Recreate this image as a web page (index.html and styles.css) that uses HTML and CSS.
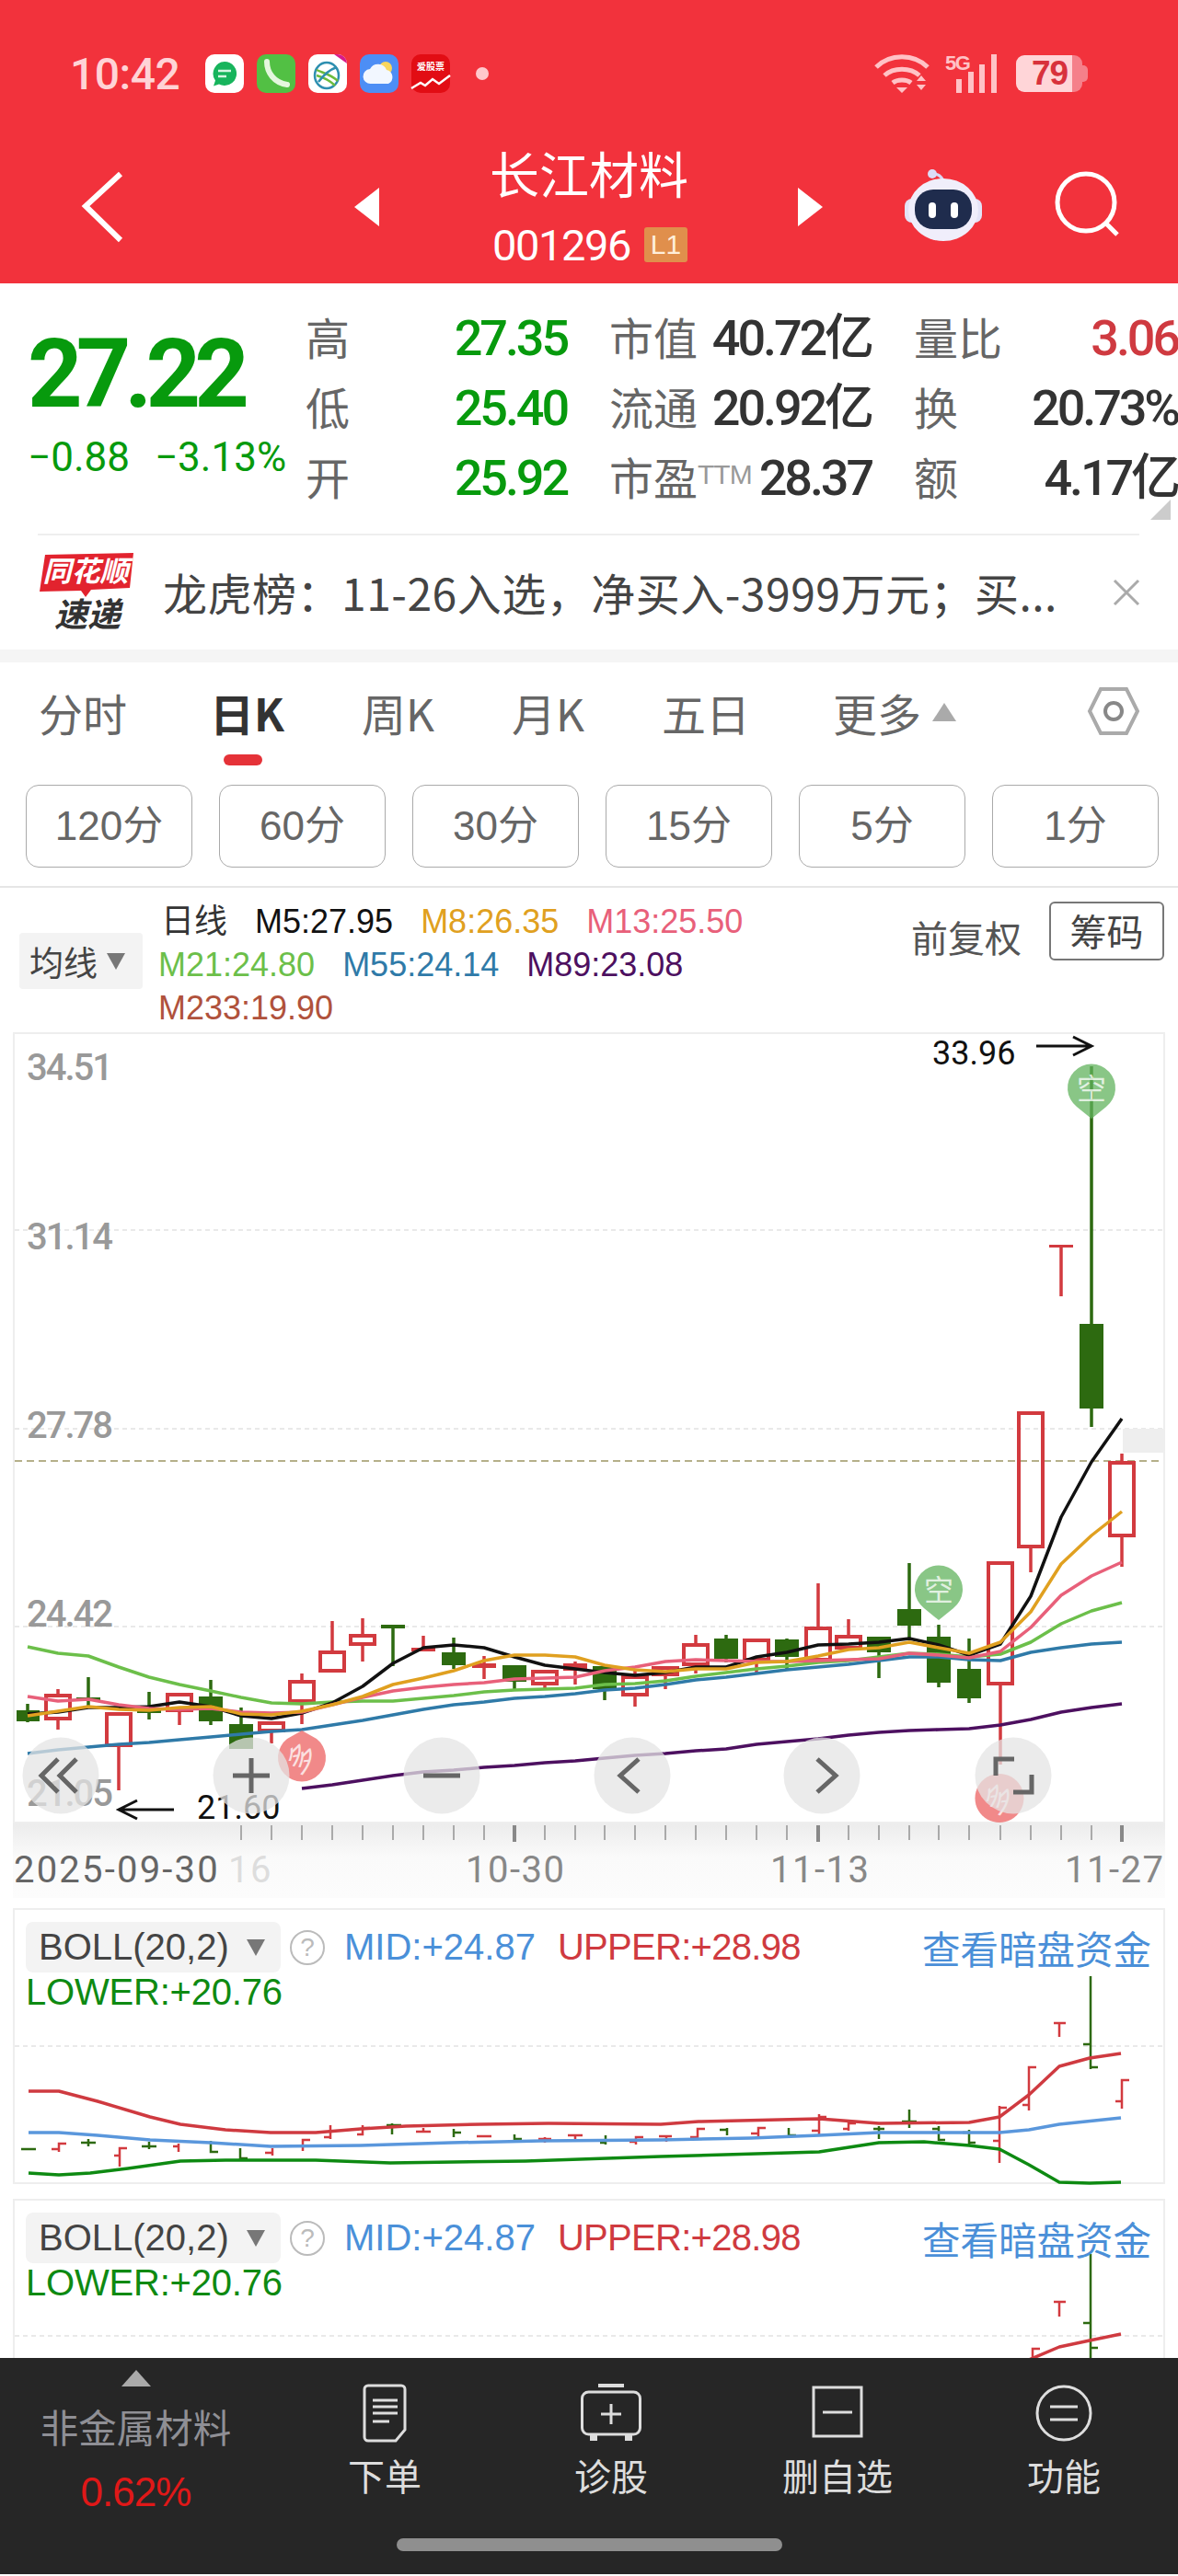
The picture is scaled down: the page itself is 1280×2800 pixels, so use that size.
FILE: index.html

```html
<!DOCTYPE html>
<html lang="zh">
<head>
  <meta charset="UTF-8" />
  <meta name="viewport" content="width=device-width, initial-scale=1.0"/>
  <title>长江材料 001296</title>
  <link rel="stylesheet" href="styles.css">
</head>
<body>
  <header class="top">
    <div class="status">
      <span class="time">10:42</span>
      <div class="apps">
        <svg class="app" viewBox="0 0 42 42"><rect width="42" height="42" rx="10" fill="#fff"/><path d="M21 8a13 13 0 1 1-6 24.500l-6 2 2-6A13 13 0 0 1 21 8z" fill="#17b45c"/><path d="M14 18h14M14 24h9" stroke="#d5f5e2" stroke-width="2.500"/></svg>
        <svg class="app" viewBox="0 0 42 42"><rect width="42" height="42" rx="10" fill="#52c044"/><path d="M11 8c0 12 8 23 22 25" fill="none" stroke="#e4f7dd" stroke-width="6" stroke-linecap="round"/></svg>
        <svg class="app" viewBox="0 0 42 42"><rect width="42" height="42" rx="10" fill="#fff"/><ellipse cx="20" cy="23" rx="13" ry="14" fill="none" stroke="#2e8fb0" stroke-width="2.500"/><path d="M9 17c6 3 16 5 23 12M9 23c7 2 14 5 20 11" fill="none" stroke="#6cbb3c" stroke-width="2.500"/><path d="M11 30c6-8 14-14 20-16" fill="none" stroke="#2e8fb0" stroke-width="2.500"/><path d="M28 0h4a10 10 0 0 1 10 10L28 0z" fill="#d81b8a"/></svg>
        <svg class="app" viewBox="0 0 42 42"><rect width="42" height="42" rx="10" fill="#4d8ef5"/><circle cx="28" cy="15" r="7" fill="#f9d65c"/><path d="M12 32a8 8 0 0 1-1-16 10 10 0 0 1 18 1 8 8 0 0 1 2 15z" fill="#f2f7ff"/></svg>
        <svg class="app" viewBox="0 0 42 42"><rect width="42" height="42" rx="10" fill="#e20d14"/><text class="app-txt" x="21" y="17">爱股票</text><path d="M0 37l10-6 5 3 8-7 7 5 12-9" fill="none" stroke="#fff" stroke-width="2.500"/></svg>
      </div>
      <span class="dot"></span>
      <svg class="wifi" viewBox="0 0 60 42"><path d="M2 14c15-15 41-15 56 0M11 23c10-9 28-9 38 0M20 31c5-4 15-4 20 0" fill="none" stroke="#ffc2c6" stroke-width="5"/><path d="M24 36h12l-6 6zM46 29l5-6 5 6zM46 33h10l-5 6z" fill="#ffc2c6"/></svg>
      <div class="signal">
        <span class="five-g">5G</span>
        <svg class="bars" viewBox="0 0 56 42"><path d="M12 27h6v15h-6zM25 19h6v23h-6zM37 11h6v31h-6zM50 0h6v42h-6z" fill="#ffc2c6"/></svg>
      </div>
      <div class="battery"><span class="batt-level">79</span></div>
    </div>
    <nav class="nav">
      <svg class="back" viewBox="0 0 44 76"><path d="M41 2L3 37l38 37" fill="none" stroke="#fff" stroke-width="6"/></svg>
      <svg class="prev" viewBox="0 0 27 42"><path d="M27 0L0 21l27 21z" fill="#fff"/></svg>
      <div class="title">
        <div class="name">长江材料</div>
        <div class="code-row"><span class="code">001296</span><span class="lvl">L1</span></div>
      </div>
      <svg class="next" viewBox="0 0 27 42"><path d="M0 0l27 21L0 42z" fill="#fff"/></svg>
      <svg class="robot" viewBox="0 0 84 78">
        <path d="M30 6c5-2 9 1 12 6" fill="none" stroke="#d8d8f4" stroke-width="3"/>
        <circle cx="30" cy="5" r="5" fill="#dcdcf6"/>
        <rect x="0" y="32" width="84" height="26" rx="8" fill="#e3e3f7"/>
        <ellipse cx="42" cy="44" rx="38" ry="34" fill="#f0eefb"/>
        <rect x="11" y="22" width="62" height="43" rx="20" fill="#1f2c4d"/>
        <rect x="26" y="36" width="8" height="17" rx="4" fill="#fff"/>
        <rect x="50" y="36" width="8" height="17" rx="4" fill="#fff"/>
      </svg>
      <svg class="search" viewBox="0 0 70 70"><circle cx="33" cy="33" r="31" fill="none" stroke="#fff" stroke-width="5"/><path d="M55 56l12 12" stroke="#fff" stroke-width="5"/></svg>
    </nav>
  </header>

  <section class="quote">
    <div class="price-box">
      <div class="price">27.22</div>
      <div class="change"><span>−0.88</span><span>−3.13%</span></div>
    </div>
    <div class="stats">
      <div class="stat"><span class="lab">高</span><span class="val down">27.35</span></div>
      <div class="stat"><span class="lab">市值</span><span class="val">40.72亿</span></div>
      <div class="stat"><span class="lab">量比</span><span class="val up">3.06</span></div>
      <div class="stat"><span class="lab">低</span><span class="val down">25.40</span></div>
      <div class="stat"><span class="lab">流通</span><span class="val">20.92亿</span></div>
      <div class="stat"><span class="lab">换</span><span class="val">20.73%</span></div>
      <div class="stat"><span class="lab">开</span><span class="val down">25.92</span></div>
      <div class="stat"><span class="lab">市盈<sup class="ttm">TTM</sup></span><span class="val">28.37</span></div>
      <div class="stat"><span class="lab">额</span><span class="val">4.17亿</span></div>
    </div>
    <span class="corner"></span>
  </section>

  <section class="news">
    <svg class="news-logo" viewBox="0 0 104 86">
      <path d="M6 2L102 0l-4 38-42 2-6 8-5-7L0 42z" fill="#e2232e"/>
      <text class="logo-top" x="50" y="31">同花顺</text>
      <text class="logo-bot" x="52" y="80">速递</text>
    </svg>
    <span class="news-text">龙虎榜：11-26入选，净买入-3999万元；买...</span>
    <svg class="close" viewBox="0 0 30 28"><path d="M2 1l26 26M28 1L2 27" stroke="#aaa" stroke-width="3"/></svg>
  </section>

  <div class="tabs">
    <span class="tab">分时</span>
    <span class="tab active">日K</span>
    <span class="tab">周K</span>
    <span class="tab">月K</span>
    <span class="tab">五日</span>
    <span class="tab more">更多<i class="more-arrow"></i></span>
    <svg class="hex" viewBox="0 0 56 52"><path d="M14 2h28l12 24-12 24H14L2 26z" fill="none" stroke="#aaa" stroke-width="4"/><circle cx="28" cy="26" r="9" fill="none" stroke="#888" stroke-width="4"/></svg>
  </div>

  <div class="periods">
    <span class="period">120分</span>
    <span class="period">60分</span>
    <span class="period">30分</span>
    <span class="period">15分</span>
    <span class="period">5分</span>
    <span class="period">1分</span>
  </div>

  <div class="ma-head">
    <div class="ma-btn">均线<i class="caret"></i></div>
    <div class="ma-lines">
      <div class="ma-row"><span class="ma-day">日线</span><span class="m5">M5:27.95</span><span class="m8">M8:26.35</span><span class="m13">M13:25.50</span></div>
      <div class="ma-row"><span class="m21">M21:24.80</span><span class="m55">M55:24.14</span><span class="m89">M89:23.08</span></div>
      <div class="ma-row"><span class="m233">M233:19.90</span></div>
    </div>
    <div class="ma-right">
      <span class="adjust">前复权</span>
      <span class="chips">筹码</span>
    </div>
  </div>

  <div class="chart">
    <svg class="plot" viewBox="16 1126 1248 856">
      <path class="grid" d="M16 1339H1264M16 1555H1264M16 1770H1264"/>
      <path class="last-line" d="M16 1590H1264"/>
      <rect x="1220" y="1555" width="44" height="26" fill="#eee"/>
      <text class="ylab" x="29" y="1176">34.51</text>
      <text class="ylab" x="29" y="1360">31.14</text>
      <text class="ylab" x="29" y="1565">27.78</text>
      <text class="ylab" x="29" y="1770">24.42</text>
      <text class="ylab" x="29" y="1965">21.05</text>

      <path class="wick-g" d="M30 1854V1874M96 1825V1857M162 1841V1871M229 1828V1877M262 1858V1903M427 1768V1813M493 1782V1816M559 1830V1838M657 1838V1850M789 1779V1809M855 1783V1817M955 1798V1826M988 1701V1783M1020 1768V1836M1053 1783V1853M1186 1161V1553"/>
      <path class="body-g" d="M18 1861h25v12h-25zM83 1847h26v4h-26zM149 1861h26v3h-26zM216 1846h26v27h-26zM249 1876h26v27h-26zM414 1768h26v4h-26zM480 1798h26v14h-26zM546 1812h26v18h-26zM644 1813h26v25h-26zM776 1783h26v22h-26zM842 1784h26v19h-26zM942 1781h26v17h-26zM975 1751h26v18h-26zM1007 1781h26v50h-26zM1040 1816h26v32h-26zM1173 1441h26v92h-26z"/>
      <path class="wick-r" d="M63 1838V1845M63 1870V1882M129 1901V1948M195 1863V1877M295 1885V1897M328 1821V1830M328 1851V1876M361 1764V1798M394 1761V1780M394 1789V1808M460 1780V1797M526 1802V1827M592 1832V1837M625 1808V1833M690 1818V1825M690 1844V1857M723 1822V1838M756 1779V1790M756 1811V1821M822 1806V1820M889 1723V1772M889 1806V1810M922 1762V1781M1087 1832V1920M1120 1683V1711M1153 1355V1411M1219 1582V1592M1219 1671V1705"/>
      <path class="body-r" d="M50 1845h26v25h-26zM116 1865h26v34h-26zM182 1844h26v17h-26zM282 1875h26v8h-26zM315 1830h26v21h-26zM348 1798h26v20h-26zM381 1780h26v9h-26zM579 1819h26v13h-26zM677 1825h26v19h-26zM710 1815h26v7h-26zM743 1790h26v21h-26zM809 1785h26v21h-26zM876 1772h26v34h-26zM909 1781h26v12h-26zM1074 1701h26v131h-26zM1107 1538h26v145h-26zM1206 1592h26v79h-26z"/>
      <path class="bar-r" d="M447 1793h26v4h-26zM513 1810h26v5h-26zM612 1810h26v8h-26zM1140 1355h26v3h-26z"/>

      <path class="ma c89" d="M328 1946L361 1942L394 1937L427 1932L460 1928L493 1926L526 1923L559 1921L592 1918L625 1916L657 1913L690 1910L723 1908L756 1905L789 1903L822 1898L855 1895L889 1892L922 1888L955 1885L988 1883L1020 1882L1053 1881L1087 1877L1120 1871L1153 1863L1186 1858L1219 1854"/>
      <path class="ma c55" d="M30 1908L63 1904L96 1901L129 1898L162 1896L195 1893L229 1890L262 1887L295 1884L328 1882L361 1877L394 1872L427 1866L460 1860L493 1855L526 1852L559 1848L592 1846L625 1843L657 1839L690 1837L723 1833L756 1828L789 1825L822 1821L855 1817L889 1814L922 1811L955 1807L988 1803L1020 1803L1053 1806L1087 1807L1120 1798L1153 1793L1186 1789L1219 1787"/>
      <path class="ma c21" d="M30 1792L63 1799L96 1802L129 1814L162 1825L195 1833L229 1840L262 1847L295 1853L328 1854L361 1852L394 1851L427 1851L460 1848L493 1845L526 1841L559 1839L592 1838L625 1837L657 1833L690 1832L723 1829L756 1824L789 1820L822 1816L855 1813L889 1809L922 1807L955 1803L988 1799L1020 1800L1053 1803L1087 1800L1120 1787L1153 1767L1186 1753L1219 1744"/>
      <path class="ma c5" d="M30 1865L63 1863L96 1858L129 1858L162 1857L195 1852L229 1857L262 1867L295 1870L328 1864L361 1853L394 1835L427 1810L460 1793L493 1790L526 1793L559 1803L592 1812L625 1816L657 1820L690 1823L723 1820L756 1814L789 1814L822 1803L855 1798L889 1790L922 1789L955 1787L988 1783L1020 1790L1053 1801L1087 1789L1120 1737L1153 1651L1186 1591L1219 1544"/>
      <path class="ma c13" d="M30 1846L63 1851L96 1849L129 1855L162 1859L195 1860L229 1859L262 1863L295 1864L328 1863L361 1855L394 1847L427 1840L460 1836L493 1833L526 1831L559 1827L592 1826L625 1825L657 1818L690 1814L723 1808L756 1806L789 1807L822 1808L855 1808L889 1807L922 1806L955 1805L988 1799L1020 1801L1053 1804L1087 1797L1120 1771L1153 1736L1186 1715L1219 1700"/>
      <path class="ma c8" d="M30 1867L63 1862L96 1857L129 1860L162 1861L195 1858L229 1857L262 1865L295 1866L328 1862L361 1855L394 1846L427 1833L460 1826L493 1818L526 1807L559 1801L592 1801L625 1803L657 1812L690 1817L723 1819L756 1816L789 1816L822 1809L855 1808L889 1802L922 1795L955 1793L988 1787L1020 1793L1053 1799L1087 1787L1120 1754L1153 1702L1186 1671L1219 1645"/>

      <path class="pin-r" d="M328 1883l16 9a26 26 0 1 1-32 0z"/>
      <text class="pin-txt" transform="translate(328 1913) rotate(-45)" y="11">多</text>
      <path class="pin-r" d="M1086 1930a26.500 26.500 0 1 1-.1 0z"/>
      <text class="pin-txt" transform="translate(1086 1957) rotate(-45)" y="11">多</text>
      <path class="pin-g" d="M1020 1763l-16-13a26 26 0 1 1 32 0z"/>
      <text class="pin-txt" x="1020" y="1742">空</text>
      <path class="pin-g" d="M1186 1218l-16-13a26 26 0 1 1 32 0z"/>
      <text class="pin-txt" x="1186" y="1197">空</text>

      <text class="mark" x="1013" y="1159">33.96</text>
      <path class="arrow" d="M1126 1139h60M1166 1129l20 10-20 10"/>
      <text class="mark" x="214" y="1979">21.60</text>
      <path class="arrow" d="M189 1969h-60M149 1959l-20 10 20 10"/>

      <circle class="tool" cx="66" cy="1932" r="41.500"/>
      <circle class="tool" cx="273" cy="1932" r="41.500"/>
      <circle class="tool" cx="480" cy="1932" r="41.500"/>
      <circle class="tool" cx="687" cy="1932" r="41.500"/>
      <circle class="tool" cx="893" cy="1932" r="41.500"/>
      <circle class="tool" cx="1101" cy="1932" r="41.500"/>
      <path class="tool-ico" d="M63 1914l-18 18 18 18M83 1914l-18 18 18 18"/>
      <path class="tool-ico" d="M273 1913v38M253 1932h40"/>
      <path class="tool-ico" d="M460 1932h40"/>
      <path class="tool-ico" d="M694 1914l-20 18 20 18"/>
      <path class="tool-ico" d="M888 1914l20 18-20 18"/>
      <path class="tool-ico" d="M1082 1932v-18h20M1121 1931v19h-20"/>
    </svg>
  </div>

  <div class="axis">
    <svg class="ticks" viewBox="14 1984 1252 81">
      <path class="tick" d="M262 1986v16M295 1986v16M328 1986v16M361 1986v16M394 1986v16M427 1986v16M460 1986v16M493 1986v16M526 1986v16M592 1986v16M625 1986v16M657 1986v16M690 1986v16M723 1986v16M756 1986v16M789 1986v16M822 1986v16M855 1986v16M922 1986v16M955 1986v16M988 1986v16M1020 1986v16M1053 1986v16M1087 1986v16M1120 1986v16M1153 1986v16M1186 1986v16"/>
      <path class="tick-big" d="M559 1986v18M889 1986v18M1219 1986v18"/>
      <text class="date first" x="15" y="2048">2025-09-30</text>
      <text class="date ghost" x="248" y="2048">16</text>
      <text class="date" x="506" y="2048">10-30</text>
      <text class="date" x="837" y="2048">11-13</text>
      <text class="date" x="1157" y="2048">11-27</text>
    </svg>
  </div>

  <div class="panels">
    <div class="panel">
      <svg class="boll" viewBox="16 2078 1248 297">
        <path class="grid" d="M16 2226H1264"/>
        <path class="mini-g" d="M23 2338h16M96 2327v8M88 2331h16M162 2330v8M154 2335h16M229 2329v12h8M261 2337v11h8M426 2310v12M420 2312h16M493 2316v9M493 2320h8M559 2322v8M559 2327h8M658 2323v10M652 2331h6M790 2315v8M790 2317h-8M857 2315v8M857 2323h8M955 2313v14M949 2316h12M988 2295v20M980 2308h16M1020 2313v16M1020 2316h-7M1020 2328h7M1053 2317v17M1053 2320h-7M1053 2331h7M1185 2150v101M1185 2224h-8M1185 2249h8"/>
        <path class="mini-r" d="M64 2341v-9h8M56 2338h8M130 2357v-20h8M124 2345h6M194 2332v9M188 2335h6M288 2342h8M296 2337v8M329 2340v-12h8M359 2312v15M352 2325h7M394 2312v10h-6M394 2315h8M452 2319h16M460 2315v5M518 2324h16M585 2327h14M592 2325v6M617 2323h16M625 2322v6M691 2333v-8h8M684 2330h7M716 2324h14M724 2324v6M758 2327v-11h8M750 2325h8M824 2324v-9h8M816 2321h8M890 2322v-22M890 2303h8M882 2318h8M922 2318v-8h8M916 2316h6M1086 2353v-62M1086 2293h8M1079 2329h7M1118 2296v-47h8M1111 2290h7M1151 2200v16M1145 2201h13M1219 2294v-31h8M1212 2286h7"/>
        <path class="bl red" d="M31 2275L64 2275L106 2286L163 2303L196 2311L245 2317L294 2320L343 2320L392 2316L441 2313L522 2311L596 2310L718 2311L759 2308L890 2305L955 2310L1053 2309L1086 2303L1118 2279L1151 2248L1184 2239L1218 2234"/>
        <path class="bl blue" d="M31 2320L64 2320L106 2323L163 2328L229 2331L294 2335L392 2334L490 2331L588 2329L718 2328L816 2326L890 2323L955 2320L1020 2320L1086 2320L1118 2317L1151 2311L1218 2304"/>
        <path class="bl green" d="M31 2364L64 2366L98 2364L139 2359L196 2351L245 2350L343 2350L424 2353L571 2351L718 2346L857 2342L890 2341L955 2331L1004 2330L1053 2334L1086 2338L1118 2355L1151 2374L1184 2375L1218 2374"/>
      </svg>
      <div class="panel-row">
        <div class="boll-btn">BOLL(20,2)<i class="caret"></i></div>
        <span class="help">?</span>
        <span class="mid">MID:+24.87</span>
        <span class="upper">UPPER:+28.98</span>
        <span class="dark-link">查看暗盘资金</span>
      </div>
      <div class="lower">LOWER:+20.76</div>
    </div>
    <div class="panel">
      <svg class="boll" viewBox="16 2394 1248 297">
        <path class="grid" d="M16 2541H1264"/>
        <path class="mini-g" d="M1185 2452v120M1185 2527h-8M1185 2554h8"/>
        <path class="mini-r" d="M1151 2503v17M1145 2504h13M1122 2572v-17h8"/>
        <path class="bl red" d="M1118 2567L1151 2553L1184 2546L1218 2539"/>
      </svg>
      <div class="panel-row">
        <div class="boll-btn">BOLL(20,2)<i class="caret"></i></div>
        <span class="help">?</span>
        <span class="mid">MID:+24.87</span>
        <span class="upper">UPPER:+28.98</span>
        <span class="dark-link">查看暗盘资金</span>
      </div>
      <div class="lower">LOWER:+20.76</div>
    </div>
  </div>

  <footer class="bottom">
    <div class="bottom-row">
      <div class="sector">
        <i class="sector-arrow"></i>
        <div class="sector-name">非金属材料</div>
        <div class="sector-pct">0.62%</div>
      </div>
      <div class="action">
        <svg class="act-ico" viewBox="0 0 66 64"><path d="M15 2h36a4 4 0 0 1 4 4v44l-10 12H15a4 4 0 0 1-4-4V6a4 4 0 0 1 4-4z" fill="none" stroke="#ddd" stroke-width="3"/><path d="M20 18h27M20 25h27M20 32h27M20 41h18" stroke="#ddd" stroke-width="3"/></svg>
        <span>下单</span>
      </div>
      <div class="action">
        <svg class="act-ico" viewBox="0 0 66 64"><path d="M19 2h28" stroke="#ddd" stroke-width="4"/><rect x="1.500" y="9" width="63" height="46" rx="7" fill="none" stroke="#ddd" stroke-width="3"/><path d="M33 22v22M22 33h22" stroke="#ddd" stroke-width="3"/><path d="M10 56h8v6h-8zM48 56h8v6h-8z" fill="#ddd"/></svg>
        <span>诊股</span>
      </div>
      <div class="action">
        <svg class="act-ico" viewBox="0 0 66 64"><rect x="7" y="4" width="52" height="53" fill="none" stroke="#ddd" stroke-width="3"/><path d="M17 31h32" stroke="#ddd" stroke-width="3"/></svg>
        <span>删自选</span>
      </div>
      <div class="action">
        <svg class="act-ico" viewBox="0 0 66 64"><circle cx="33" cy="32" r="29" fill="none" stroke="#ddd" stroke-width="3"/><path d="M18 25h30M18 39h30" stroke="#ddd" stroke-width="3"/></svg>
        <span>功能</span>
      </div>
    </div>
    <div class="handle"></div>
  </footer>
</body>
</html>
```

FILE: styles.css

```css
* {
  box-sizing: border-box;
}
html, body {
  margin: 0;
}
body {
  width: 1280px;
  height: 2800px;
  overflow: hidden;
  background: #fff;
  color: #444;
  font-family: "Noto Sans CJK SC", "Noto Sans", sans-serif;
}
svg {
  display: block;
  flex: none;
  overflow: visible;
}

/* red top bar */
.top {
  height: 308px;
  padding-top: 59px;
  background: #f2323c;
}
.status {
  display: flex;
  align-items: center;
  height: 42px;
  padding-left: 76px;
}
.time {
  width: 118px;
  font: 500 48px Roboto, sans-serif;
  letter-spacing: -0.5px;
  color: #ffd3d6;
}
.apps {
  display: flex;
  gap: 14px;
  margin-left: 29px;
}
.app {
  width: 42px;
  height: 42px;
}
.app-txt {
  font: 700 10px "Noto Sans CJK SC", sans-serif;
  fill: #fff;
  text-anchor: middle;
}
.dot {
  width: 14px;
  height: 14px;
  margin-left: 28px;
  border-radius: 50%;
  background: #ffc8cc;
}
.wifi {
  width: 60px;
  height: 42px;
  margin-left: 419px;
}
.signal {
  position: relative;
  width: 56px;
  height: 42px;
  margin-left: 17px;
}
.five-g {
  position: absolute;
  left: 0;
  top: 0;
  font: 700 22px/20px "Liberation Sans", sans-serif;
  letter-spacing: -1.500px;
  color: #ffc2c6;
}
.bars {
  width: 56px;
  height: 42px;
}
.battery {
  position: relative;
  width: 72px;
  height: 40px;
  margin-left: 21px;
  padding-left: 17px;
  border-radius: 9px;
  background: linear-gradient(90deg, #ffd5d8 85%, #f5808a 85%);
  font: 700 37px/40px "Liberation Sans", sans-serif;
  color: #d8323c;
}
.battery::after {
  content: "";
  position: absolute;
  right: -6px;
  top: 11px;
  width: 6px;
  height: 18px;
  border-radius: 0 5px 5px 0;
  background: #f5808a;
}
.batt-level {
  letter-spacing: -1px;
}
.nav {
  display: flex;
  align-items: center;
  height: 130px;
  margin-top: 59px;
  padding-left: 90px;
}
.back {
  width: 44px;
  height: 76px;
}
.prev {
  width: 27px;
  height: 42px;
  margin-left: 251px;
}
.title {
  width: 215px;
  margin-left: 120px;
  color: #fff;
}
.name {
  margin-top: -6px;
  font-size: 54px;
  line-height: 62px;
  text-align: center;
  white-space: nowrap;
}
.code-row {
  display: flex;
  align-items: center;
  justify-content: space-between;
  height: 40px;
  margin-top: 27px;
  margin-bottom: 1px;
  padding-left: 3px;
}
.code {
  font: 400 47px Roboto, sans-serif;
  letter-spacing: -1.400px;
}
.lvl {
  width: 47px;
  height: 38px;
  border-radius: 3px;
  background: #e08f4c;
  font: 400 30px/38px "Liberation Sans", sans-serif;
  text-align: center;
  color: #ffeeda;
}
.next {
  width: 27px;
  height: 42px;
  margin-left: 120px;
}
.robot {
  width: 84px;
  height: 78px;
  margin-left: 89px;
  margin-top: -4px;
}
.search {
  width: 70px;
  height: 70px;
  margin-left: 80px;
  margin-top: -6px;
}

/* price block */
.quote {
  position: relative;
  display: flex;
  height: 272px;
  padding: 20px 0 0 30px;
}
.price-box {
  width: 303px;
}
.price {
  margin-top: 21px;
  font: 700 104px/116px Roboto, sans-serif;
  letter-spacing: -7px;
  color: #079a0d;
}
.change {
  display: flex;
  gap: 27px;
  margin-top: 6px;
  font: 400 44px/52px Roboto, sans-serif;
  color: #079a0d;
}
.stats {
  display: grid;
  grid-template-columns: 284px 285px 287px;
  grid-auto-rows: 76px;
  column-gap: 46px;
}
.stat {
  display: flex;
  align-items: center;
  justify-content: space-between;
}
.lab {
  padding-bottom: 2px;
  font-size: 48px;
  color: #666;
  line-height: 60px;
  white-space: nowrap;
}
.ttm {
  font: 300 30px "Liberation Sans", sans-serif;
  letter-spacing: -1px;
  vertical-align: 12px;
  line-height: 0;
  color: #999;
}
.val {
  padding-top: 4px;
  font: 500 54px/60px Roboto, "Noto Sans CJK SC", sans-serif;
  letter-spacing: -3.100px;
  color: #333;
  white-space: nowrap;
}
.val.down {
  color: #079a0d;
}
.val.up {
  color: #cf3a40;
}
.corner {
  position: absolute;
  right: 8px;
  bottom: 15px;
  width: 0;
  height: 0;
  border-left: 22px solid transparent;
  border-bottom: 22px solid #ccc;
}

/* news strip */
.news {
  display: flex;
  align-items: center;
  height: 126px;
  margin: 0 42px 0 41px;
  border-top: 2px solid #eee;
}
.news-logo {
  width: 104px;
  height: 86px;
  margin-left: 2px;
}
.logo-top {
  font: italic 700 31px "Noto Sans CJK SC", sans-serif;
  fill: #fff;
  text-anchor: middle;
}
.logo-bot {
  font: italic 700 36px "Noto Sans CJK SC", sans-serif;
  fill: #333;
  text-anchor: middle;
}
.news-text {
  margin-left: 30px;
  padding-bottom: 2px;
  font-size: 48px;
  letter-spacing: 0.500px;
  white-space: nowrap;
  color: #444;
}
.close {
  width: 30px;
  height: 28px;
  margin-left: auto;
  margin-right: -1px;
}

/* period tabs */
.tabs {
  display: flex;
  align-items: center;
  gap: 84px;
  height: 147px;
  padding: 0 42px 25px 42px;
  border-top: 14px solid #f5f5f5;
}
.tab {
  position: relative;
  font-size: 48px;
  line-height: 60px;
  color: #666;
  white-space: nowrap;
}
.tab.active {
  margin-left: 6px;
  font-weight: 700;
  color: #333;
}
.tab.active::after {
  content: "";
  position: absolute;
  left: 15px;
  bottom: -28px;
  width: 42px;
  height: 12px;
  border-radius: 6px;
  background: #e53238;
}
.more {
  display: flex;
  align-items: center;
  gap: 12px;
  margin-left: 6px;
}
.more-arrow {
  width: 0;
  height: 0;
  border-left: 13px solid transparent;
  border-right: 13px solid transparent;
  border-bottom: 20px solid #aaa;
}
.hex {
  width: 56px;
  height: 52px;
  margin-left: auto;
  margin-top: -3px;
}
.periods {
  display: grid;
  grid-template-columns: repeat(6, 181px);
  gap: 29px;
  height: 112px;
  padding-left: 28px;
  border-bottom: 2px solid #e6e6e6;
}
.period {
  height: 90px;
  border: 1px solid #aaa;
  border-radius: 14px;
  font: 400 44px/88px "Liberation Sans", "Noto Sans CJK SC", sans-serif;
  text-align: center;
  color: #666;
}

/* moving average legend */
.ma-head {
  display: flex;
  height: 157px;
  padding: 13px 15px 0 21px;
}
.ma-btn {
  display: flex;
  align-items: center;
  gap: 10px;
  width: 134px;
  height: 61px;
  margin-top: 36px;
  padding-left: 11px;
  border-radius: 4px;
  background: #f3f3f3;
  font-size: 37px;
  color: #444;
}
.caret {
  display: block;
  width: 0;
  height: 0;
  border-left: 10px solid transparent;
  border-right: 10px solid transparent;
  border-top: 18px solid #777;
}
.ma-lines {
  margin-left: 17px;
}
.ma-row {
  display: flex;
  gap: 30px;
  font: 400 36px/47px "Liberation Sans", "Noto Sans CJK SC", sans-serif;
  white-space: nowrap;
}
.ma-day {
  margin-left: 3px;
  color: #333;
}
.m5 { color: #111; }
.m8 { color: #e0a020; }
.m13 { color: #e8607a; }
.m21 { color: #6cbf4a; }
.m55 { color: #2f7aa8; }
.m89 { color: #4d1060; }
.m233 { color: #b0523c; }
.ma-right {
  display: flex;
  align-items: center;
  gap: 30px;
  height: 64px;
  margin-left: auto;
  margin-top: 2px;
}
.adjust {
  margin-top: 12px;
  font-size: 40px;
  color: #555;
}
.chips {
  width: 125px;
  height: 64px;
  border: 2px solid #777;
  border-radius: 6px;
  font-size: 40px;
  line-height: 58px;
  text-align: center;
  color: #444;
}

/* main candle chart */
.chart {
  width: 1252px;
  margin-left: 14px;
  border: 2px solid #eee;
}
.plot {
  width: 1248px;
  height: 856px;
}
.grid {
  fill: none;
  stroke: #e2e2e2;
  stroke-width: 1.500;
  stroke-dasharray: 5 4;
}
.last-line {
  fill: none;
  stroke: #b5b08a;
  stroke-width: 2;
  stroke-dasharray: 8 5;
}
.ylab {
  font: 500 40px Roboto, sans-serif;
  letter-spacing: -2px;
  fill: #999;
}
.wick-g {
  fill: none;
  stroke: #2d6a10;
  stroke-width: 3.500;
}
.body-g {
  fill: #2d6a10;
}
.wick-r {
  fill: none;
  stroke: #d23a3f;
  stroke-width: 3.500;
}
.body-r {
  fill: none;
  stroke: #d23a3f;
  stroke-width: 4;
}
.bar-r {
  fill: #d23a3f;
}
.ma {
  fill: none;
  stroke-width: 3.500;
  stroke-linejoin: round;
}
.c5 { stroke: #111; }
.c8 { stroke: #e0a020; }
.c13 { stroke: #e8607a; }
.c21 { stroke: #6cbf4a; }
.c55 { stroke: #2f7aa8; }
.c89 { stroke: #4d1060; }
.pin-r {
  fill: #ee6b6b;
  opacity: 0.8;
}
.pin-g {
  fill: #62b35e;
  opacity: 0.75;
}
.pin-txt {
  font: 400 32px "Noto Sans CJK SC", sans-serif;
  fill: #fff;
  fill-opacity: 0.75;
  text-anchor: middle;
}
.mark {
  font: 400 36px Roboto, sans-serif;
  fill: #111;
}
.arrow {
  fill: none;
  stroke: #111;
  stroke-width: 3;
}
.tool {
  fill: #e4e4e4;
  fill-opacity: 0.75;
}
.tool-ico {
  fill: none;
  stroke: #666;
  stroke-width: 5;
}

/* date axis */
.axis {
  width: 1252px;
  height: 81px;
  margin-left: 14px;
  background: linear-gradient(#ececec, #fafafa 45%, #fcfcfc);
}
.ticks {
  width: 1252px;
  height: 81px;
}
.tick {
  fill: none;
  stroke: #aaa;
  stroke-width: 2;
}
.tick-big {
  fill: none;
  stroke: #888;
  stroke-width: 4;
}
.date {
  font: 400 40px Roboto, sans-serif;
  letter-spacing: 1.500px;
  fill: #888;
}
.date.first {
  letter-spacing: 2.200px;
  fill: #666;
}
.date.ghost {
  fill: #ddd;
}

/* indicator panels */
.panels {
  display: flex;
  flex-direction: column;
  gap: 16px;
  height: 500px;
  padding-top: 11px;
  overflow: hidden;
}
.panel {
  position: relative;
  flex: none;
  width: 1252px;
  height: 300px;
  margin-left: 14px;
  padding: 13px 13px 0 12px;
  border: 2px solid #eee;
}
.boll {
  position: absolute;
  left: 0;
  top: 0;
  width: 1248px;
  height: 297px;
}
.mini-g {
  fill: none;
  stroke: #2d6a10;
  stroke-width: 2.500;
}
.mini-r {
  fill: none;
  stroke: #d23a3f;
  stroke-width: 2.500;
}
.bl {
  fill: none;
  stroke-width: 3.500;
  stroke-linejoin: round;
}
.bl.red { stroke: #cf3a40; }
.bl.blue { stroke: #5a97dc; }
.bl.green { stroke: #0e8a12; }
.panel-row {
  position: relative;
  display: flex;
  align-items: center;
  height: 55px;
  font: 400 40px "Liberation Sans", "Noto Sans CJK SC", sans-serif;
  white-space: nowrap;
}
.boll-btn {
  display: flex;
  align-items: center;
  justify-content: space-between;
  width: 277px;
  height: 55px;
  padding: 0 17px 0 14px;
  border-radius: 8px;
  background: #f3f3f3;
  font-size: 40px;
  color: #444;
}
.help {
  width: 38px;
  height: 38px;
  margin-left: 10px;
  border: 2px solid #bbb;
  border-radius: 50%;
  font-size: 28px;
  line-height: 34px;
  text-align: center;
  color: #bbb;
}
.mid {
  margin-left: 21px;
  color: #4a90d9;
}
.upper {
  margin-left: 24px;
  letter-spacing: -0.700px;
  color: #cf3a40;
}
.dark-link {
  margin-left: auto;
  font-size: 41.500px;
  color: #4a8fd8;
}
.lower {
  position: relative;
  font: 400 40px/42px "Liberation Sans", sans-serif;
  letter-spacing: -0.200px;
  color: #0e8a12;
}

/* bottom action bar */
.bottom {
  height: 235px;
  background: #262626;
}
.bottom-row {
  display: flex;
  height: 196px;
}
.sector {
  width: 295px;
  padding-top: 13px;
  text-align: center;
}
.sector-arrow {
  display: block;
  width: 0;
  height: 0;
  margin: 0 auto;
  border-left: 16px solid transparent;
  border-right: 16px solid transparent;
  border-bottom: 18px solid #aaa;
}
.sector-name {
  margin-top: 13px;
  font-size: 41.500px;
  line-height: 60px;
  color: #8f8f95;
}
.sector-pct {
  margin-top: 12px;
  font: 400 44px/60px "Liberation Sans", sans-serif;
  letter-spacing: -1px;
  color: #e01818;
}
.action {
  display: flex;
  flex-direction: column;
  align-items: center;
  width: 246px;
  padding-top: 28px;
  font-size: 40px;
  line-height: 54px;
  color: #ddd;
}
.act-ico {
  width: 66px;
  height: 64px;
  margin-bottom: 8px;
}
.handle {
  width: 419px;
  height: 14px;
  margin: 0 auto;
  border-radius: 7px;
  background: #8f8f8f;
}
```
